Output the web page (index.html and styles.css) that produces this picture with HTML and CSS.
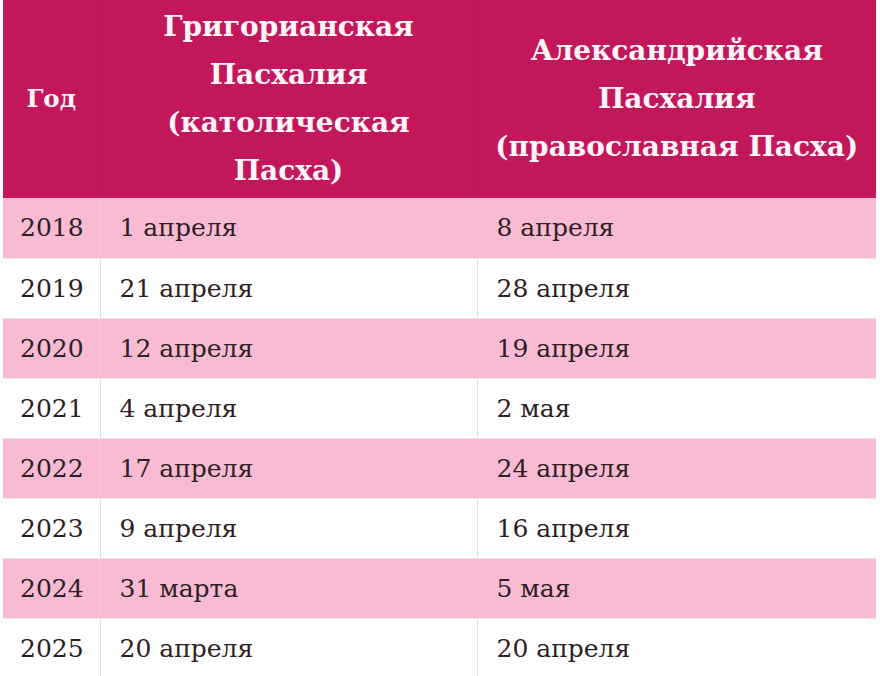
FILE: index.html
```html
<!DOCTYPE html>
<html lang="ru">
<head>
<meta charset="utf-8">
<title>Пасхалия</title>
<link rel="stylesheet" href="styles.css">
</head>
<body>
<table class="easter">
  <colgroup>
    <col class="c-year">
    <col class="c-greg">
    <col class="c-alex">
  </colgroup>
  <thead>
    <tr>
      <th>Год</th>
      <th>Григорианская<br>Пасхалия<br>(католическая<br>Пасха)</th>
      <th>Александрийская<br>Пасхалия<br>(православная Пасха)</th>
    </tr>
  </thead>
  <tbody>
    <tr class="pink"><td>2018</td><td>1 апреля</td><td>8 апреля</td></tr>
    <tr><td>2019</td><td>21 апреля</td><td>28 апреля</td></tr>
    <tr class="pink"><td>2020</td><td>12 апреля</td><td>19 апреля</td></tr>
    <tr><td>2021</td><td>4 апреля</td><td>2 мая</td></tr>
    <tr class="pink"><td>2022</td><td>17 апреля</td><td>24 апреля</td></tr>
    <tr><td>2023</td><td>9 апреля</td><td>16 апреля</td></tr>
    <tr class="pink"><td>2024</td><td>31 марта</td><td>5 мая</td></tr>
    <tr><td>2025</td><td>20 апреля</td><td>20 апреля</td></tr>
  </tbody>
</table>
</body>
</html>
```

FILE: styles.css
```css
html, body {
  margin: 0;
  padding: 0;
  background: #ffffff;
}
body {
  padding: 0 4px 0 3px;
  font-family: "DejaVu Serif", "Liberation Serif", serif;
  overflow: hidden;
}
.easter {
  border-collapse: collapse;
  width: 873px;
  table-layout: fixed;
}
.c-year { width: 97px; }
.c-greg { width: 377px; }
.c-alex { width: 399px; }

.easter th {
  background: #c2185b;
  color: #fff4f8;
  font-weight: bold;
  font-size: 28px;
  line-height: 48px;
  height: 198px;
  padding: 0 2px;
  text-align: center;
  vertical-align: middle;
  box-sizing: border-box;
  border-left: 1px solid #b8155a;
  white-space: nowrap;
}
.easter th:first-child {
  border-left: none;
  font-size: 24.5px;
}
.easter td {
  height: 60px;
  padding: 0 0 0 19px;
  font-size: 25px;
  color: #2e1e25;
  vertical-align: middle;
  box-sizing: border-box;
  border-bottom: 1px solid #f1e6ea;
  border-left: 1px solid #eadde2;
  white-space: nowrap;
}
.easter td:first-child {
  border-left: none;
  padding-left: 17px;
}
.easter tr.pink td {
  background: #f9bbd3;
  border-left-color: #f2c8d8;
}
```
